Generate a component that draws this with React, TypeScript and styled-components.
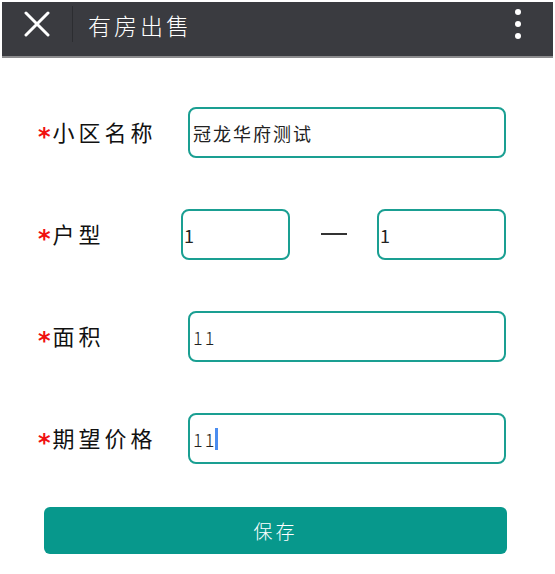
import styled, { createGlobalStyle } from "styled-components";

const GlobalStyle = createGlobalStyle`
  html, body {
    margin: 0;
    padding: 0;
    background: #ffffff;
  }
  body {
    font-family: "Noto Sans CJK SC", "Noto Sans", sans-serif;
    color: #111;
  }
`;

interface FieldRow {
  label: string;
  value: string;
  caret?: boolean;
}

const rows: FieldRow[] = [
  { label: "小区名称", value: "冠龙华府测试" },
  { label: "面积", value: "11" },
  { label: "期望价格", value: "11", caret: true },
];

export default function App() {
  return (
    <Page>
      <GlobalStyle />
      <Header>
        <CloseButton aria-label="close">
          <svg width="26" height="26" viewBox="0 0 26 26">
            <path
              d="M2 2 L24 24 M24 2 L2 24"
              stroke="#fff"
              strokeWidth="3"
              strokeLinecap="round"
            />
          </svg>
        </CloseButton>
        <Divider />
        <Title>有房出售</Title>
        <MoreButton aria-label="more">
          <Dot />
          <Dot />
          <Dot />
        </MoreButton>
      </Header>
      <Form>
        <Row>
          <Label>
            <Star>*</Star>
            {rows[0].label}
          </Label>
          <Field>{rows[0].value}</Field>
        </Row>
        <Row>
          <Label $width={143}>
            <Star>*</Star>户型
          </Label>
          <Pair>
            <Field $pad={1} $width={109}>1</Field>
            <Dash />
            <Field $pad={1} $width={129}>1</Field>
          </Pair>
        </Row>
        {rows.slice(1).map((row) => (
          <Row key={row.label}>
            <Label>
              <Star>*</Star>
              {row.label}
            </Label>
            <Field $thin>
              {row.value}
              {row.caret && <Caret />}
            </Field>
          </Row>
        ))}
        <SaveButton>保存</SaveButton>
      </Form>
    </Page>
  );
}

const Page = styled.div`
  width: 555px;
  min-height: 574px;
  padding-top: 2px;
  box-sizing: border-box;
  background: #fff;
`;

const Header = styled.header`
  display: flex;
  align-items: flex-start;
  height: 54px;
  margin: 0 2px;
  background: #3a3b40;
  border-bottom: 2px solid #8c8c8e;
`;

const CloseButton = styled.div`
  width: 70px;
  height: 44px;
  display: flex;
  align-items: center;
  justify-content: center;
`;

const Divider = styled.div`
  width: 1px;
  height: 36px;
  margin-top: 4px;
  background: #2c2d31;
`;

const Title = styled.h1`
  margin: 7px 0 0 15px;
  font-size: 23px;
  font-weight: 300;
  letter-spacing: 3px;
  line-height: 32px;
  color: #fff;
`;

const MoreButton = styled.div`
  margin: 7px 15px 0 auto;
  width: 40px;
  display: flex;
  flex-direction: column;
  align-items: center;
  gap: 6px;
`;

const Dot = styled.span`
  width: 6px;
  height: 6px;
  border-radius: 50%;
  background: #fff;
`;

const Form = styled.main`
  display: flex;
  flex-direction: column;
  gap: 51px;
  padding: 49px 49px 0 38px;
`;

const Row = styled.div`
  display: flex;
  align-items: center;
  height: 51px;
`;

const Label = styled.div<{ $width?: number }>`
  flex: none;
  width: ${(p) => p.$width ?? 150}px;
  display: flex;
  align-items: center;
  font-size: 22px;
  letter-spacing: 4px;
  color: #111;
  margin-top: -4px;
`;

const Star = styled.span`
  color: #f01010;
  font-family: "DejaVu Sans", sans-serif;
  font-size: 24px;
  font-weight: 700;
  line-height: 1;
  letter-spacing: 0;
  margin-right: 2px;
  position: relative;
  top: 6px;
`;

const Field = styled.div<{ $pad?: number; $width?: number; $thin?: boolean }>`
  flex: ${(p) => (p.$width ? "none" : "1")};
  width: ${(p) => (p.$width ? `${p.$width}px` : "auto")};
  height: 51px;
  box-sizing: border-box;
  border: 2px solid #1a9f92;
  border-radius: 8px;
  display: flex;
  align-items: center;
  padding-left: ${(p) => p.$pad ?? 3}px;
  font-size: 18px;
  font-weight: ${(p) => (p.$thin ? 300 : 400)};
  letter-spacing: 2px;
  color: #222;
`;

const Pair = styled.div`
  flex: 1;
  display: flex;
  align-items: center;
  justify-content: space-between;
`;

const Dash = styled.span`
  width: 26px;
  height: 2px;
  background: #333;
  margin-top: -2px;
`;

const Caret = styled.span`
  width: 3px;
  height: 22px;
  margin-left: -1px;
  background: #4a8df0;
`;

const SaveButton = styled.button`
  margin: -8px 0 0 6px;
  width: 463px;
  height: 47px;
  border: none;
  border-radius: 6px;
  background: #07988c;
  color: #fff;
  font-family: "Noto Sans CJK SC", sans-serif;
  font-size: 19px;
  font-weight: 300;
  letter-spacing: 3px;
`;
